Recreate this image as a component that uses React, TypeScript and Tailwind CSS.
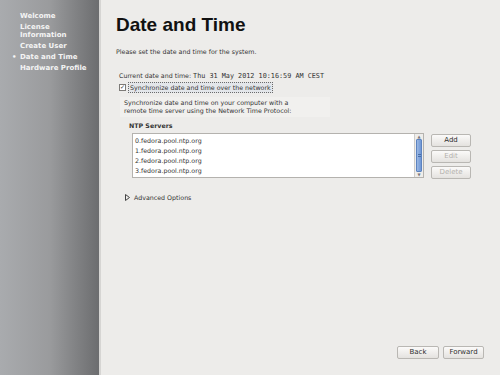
const NAV = [
  { label: "Welcome" },
  { label: "License\nInformation" },
  { label: "Create User" },
  { label: "Date and Time", active: true },
  { label: "Hardware Profile" },
];

const SERVERS = [
  "0.fedora.pool.ntp.org",
  "1.fedora.pool.ntp.org",
  "2.fedora.pool.ntp.org",
  "3.fedora.pool.ntp.org",
];

function Btn({ label, disabled }: { label: string; disabled?: boolean }) {
  return (
    <div
      className={`h-[13px] flex items-center justify-center rounded-[2px] border border-[#b9b7b3] bg-gradient-to-b from-[#fbfaf9] to-[#e4e2df] text-[7px] ${
        disabled ? "text-[#b3b1ad]" : "text-[#2e2e2e]"
      }`}
    >
      {label}
    </div>
  );
}

export default function App() {
  return (
    <div
      className="w-[500px] h-[375px] flex bg-[#edecea] overflow-hidden"
      style={{ fontFamily: '"DejaVu Sans", sans-serif' }}
    >
      {/* sidebar */}
      <div className="w-[99px] h-full bg-gradient-to-r from-[#a9abae] via-[#9a9b9d] to-[#6c6d6f] pt-[13px] pl-[20px]">
        {NAV.map((n) => (
          <div
            key={n.label}
            className="relative text-[7px] leading-[7.5px] font-bold text-[#f4f4f4] whitespace-pre mb-[3.5px]"
          >
            {n.active && (
              <span className="absolute left-[-8px] top-0">•</span>
            )}
            {n.label}
          </div>
        ))}
      </div>
      <div className="w-[2px] h-full bg-[#d6d5d3]" />

      {/* main */}
      <div className="flex-1 flex flex-col pl-[15px] pr-[16px]">
        <h1
          className="mt-[14px] text-[19px] leading-[21px] font-bold text-[#111]"
          style={{ fontFamily: '"Liberation Sans", sans-serif' }}
        >
          Date and Time
        </h1>
        <p className="mt-[12px] text-[6.3px] text-[#333]">
          Please set the date and time for the system.
        </p>

        <div className="mt-[15px] ml-[3px] text-[6.3px] text-[#333]">
          Current date and time:{" "}
          <span
            className="text-[6.8px]"
            style={{ fontFamily: '"DejaVu Sans Mono", monospace' }}
          >
            Thu 31 May 2012 10:16:59 AM CEST
          </span>
        </div>

        <div className="mt-[0px] ml-[3px] flex items-center gap-[2px]">
          <div className="w-[7px] h-[7px] border border-[#7d7b78] bg-white flex items-center justify-center text-[6px] leading-none text-[#333]">
            ✓
          </div>
          <div className="border border-dotted border-[#6b6b6b] bg-[#e3e6ea] px-[1px] text-[6.3px] leading-[9px] text-[#333]">
            Synchronize date and time over the network
          </div>
        </div>

        <div className="mt-[4px] ml-[4px] w-[210px] bg-[#f1f0ee] pl-[4px] py-[2px] text-[6.3px] leading-[8px] text-[#333]">
          Synchronize date and time on your computer with a
          <br />
          remote time server using the Network Time Protocol:
        </div>

        <div className="mt-[4px] ml-[13px] text-[6.3px] font-bold text-[#333]">
          NTP Servers
        </div>

        <div className="mt-[3px] ml-[16px] mr-[13px] flex gap-[7px]">
          <div className="flex-1 flex h-[45px] border border-[#b4b2ae] bg-white">
            <div className="flex-1 pl-[2px] pt-[2px]">
              {SERVERS.map((s) => (
                <div
                  key={s}
                  className="text-[6.3px] leading-[10px] text-[#333]"
                >
                  {s}
                </div>
              ))}
            </div>
            <div className="w-[9px] h-full border-l border-[#cfcdca] bg-[#eeedeb] flex flex-col">
              <div className="h-[5px] text-[4px] leading-[5px] text-center text-[#777]">
                ▲
              </div>
              <div className="flex-1 mx-[1px] rounded-[1px] bg-gradient-to-r from-[#9bb8e3] to-[#6f97d6] border border-[#5c83c0] flex items-center justify-center">
                <div className="w-[3px] h-[3px] border-y border-[#4a6fa8]" />
              </div>
              <div className="h-[5px] text-[4px] leading-[5px] text-center text-[#777]">
                ▼
              </div>
            </div>
          </div>
          <div className="w-[40px] flex flex-col gap-[3px] pt-[1px]">
            <Btn label="Add" />
            <Btn label="Edit" disabled />
            <Btn label="Delete" disabled />
          </div>
        </div>

        <div className="mt-[14px] ml-[9px] flex items-center gap-[4px] text-[6.3px] text-[#333]">
          <svg width="5" height="7" viewBox="0 0 5 7">
            <path d="M0.5 0.5 L4.5 3.5 L0.5 6.5 Z" fill="none" stroke="#444" strokeWidth="1" />
          </svg>
          Advanced Options
        </div>

        <div className="flex-1" />

        <div className="mb-[16px] flex justify-end gap-[4px]">
          <div className="w-[42px]">
            <Btn label="Back" />
          </div>
          <div className="w-[41px]">
            <Btn label="Forward" />
          </div>
        </div>
      </div>
    </div>
  );
}
